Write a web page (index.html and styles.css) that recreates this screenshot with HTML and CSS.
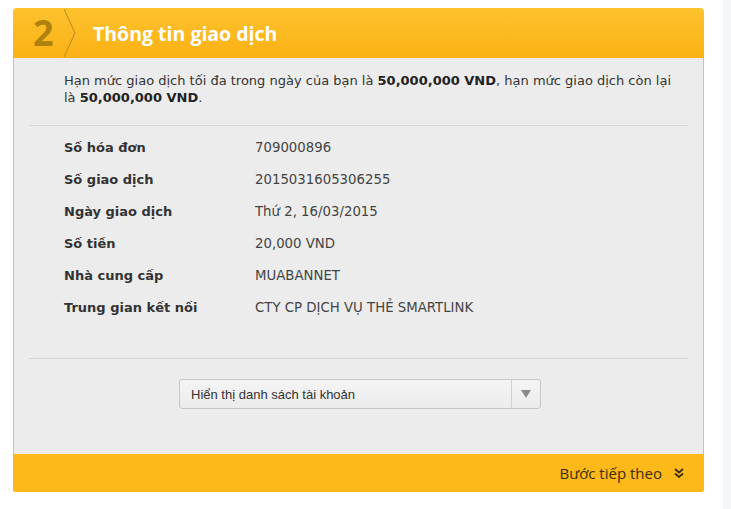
FILE: index.html
```html
<!DOCTYPE html>
<html lang="vi">

<head>
  <meta charset="UTF-8">
  <meta name="viewport" content="width=device-width, initial-scale=1.0">
  <title>Thông tin giao dịch</title>
  <link rel="stylesheet" href="styles.css">
</head>

<body>
  <div class="page">
    <section class="step">
      <header class="step-head">
        <span class="step-num">2</span>
        <svg class="step-arrow" width="14" height="50" viewBox="0 0 14 50">
          <path d="M1 1 L12 25 L1 49" fill="none" stroke="#b98a1c" stroke-width="1" />
        </svg>
        <h2 class="step-title">Thông tin giao dịch</h2>
      </header>

      <div class="step-body">
        <p class="limit">
          Hạn mức giao dịch tối đa trong ngày của bạn là <b>50,000,000 VND</b>, hạn mức giao dịch còn lại
          là <b>50,000,000 VND</b>.
        </p>

        <hr class="line">

        <dl class="details">
          <dt>Số hóa đơn</dt>
          <dd>709000896</dd>
          <dt>Số giao dịch</dt>
          <dd>2015031605306255</dd>
          <dt>Ngày giao dịch</dt>
          <dd>Thứ 2, 16/03/2015</dd>
          <dt>Số tiền</dt>
          <dd>20,000 VND</dd>
          <dt>Nhà cung cấp</dt>
          <dd>MUABANNET</dd>
          <dt>Trung gian kết nối</dt>
          <dd>CTY CP DỊCH VỤ THẺ SMARTLINK</dd>
        </dl>

        <hr class="line">

        <div class="picker">
          <span class="picker-text">Hiển thị danh sách tài khoản</span>
          <span class="picker-btn">
            <svg width="10" height="8" viewBox="0 0 10 8"><path d="M0 0 H10 L5 8 Z" fill="#8a8a8a" /></svg>
          </span>
        </div>
      </div>

      <footer class="step-foot">
        <span>Bước tiếp theo</span>
        <svg class="next-icon" width="10" height="10" viewBox="0 0 10 10">
          <path d="M1 1 L5 4.5 L9 1 M1 5.5 L5 9 L9 5.5" fill="none" stroke="#3b2d0b" stroke-width="1.8" />
        </svg>
      </footer>
    </section>

    <div class="side"></div>
  </div>
</body>

</html>
```

FILE: styles.css
```css
html {
  margin: 0;
  padding: 0;
  background: #fff;
}

body {
  margin: 0;
  padding: 0;
}

.page {
  display: flex;
  min-height: 509px;
}

.step {
  width: 691px;
  margin: 8px 0 0 13px;
  align-self: flex-start;
}

.step-head {
  display: flex;
  align-items: center;
  height: 50px;
  border-radius: 4px 4px 0 0;
  background: linear-gradient(#fdc22e, #fbb114);
}

.step-num {
  width: 20px;
  margin-left: 20px;
  font-family: "Open Sans", sans-serif;
  font-size: 36px;
  font-weight: 700;
  line-height: 1;
  color: #ad820f;
}

.step-arrow {
  margin-left: 10px;
}

.step-title {
  margin: 0 0 0 16px;
  font-family: "Open Sans", sans-serif;
  font-size: 19.5px;
  font-weight: 700;
  color: #fff;
}

.step-body {
  background: #ececec;
  border-left: 1px solid #f3c04a;
  border-right: 1px solid #f3c04a;
  padding: 14px 15px 45px;
}

.limit {
  margin: 0 12px 0 35px;
  font-family: "DejaVu Sans", Tahoma, sans-serif;
  font-size: 13px;
  line-height: 17px;
  color: #333;
}

.limit b {
  color: #222;
}

.line {
  border: 0;
  border-top: 1px solid #d6d6d6;
  margin: 19px 0 0;
}

.details {
  display: grid;
  grid-template-columns: 191px 1fr;
  grid-auto-rows: 32px;
  align-items: center;
  margin: 5px 0 35px 35px;
  font-family: "DejaVu Sans", Verdana, sans-serif;
  font-size: 13px;
}

.details dt {
  font-weight: 700;
  color: #333;
}

.details dd {
  margin: 0;
  font-size: 13.3px;
  color: #444;
}

.details + .line {
  margin-top: 0;
}

.picker {
  display: flex;
  width: 360px;
  height: 28px;
  margin: 20px 0 0 150px;
  border: 1px solid #c6c6c6;
  border-radius: 3px;
  background: linear-gradient(#f4f4f4, #ececec);
  font-family: "Liberation Sans", Arial, sans-serif;
  font-size: 13px;
  color: #333;
}

.picker-text {
  flex: 1;
  display: flex;
  align-items: center;
  padding-left: 11px;
}

.picker-btn {
  width: 28px;
  display: flex;
  align-items: center;
  justify-content: center;
  border-left: 1px solid #d0d0d0;
}

.step-foot {
  display: flex;
  align-items: center;
  justify-content: flex-end;
  gap: 12px;
  height: 38px;
  padding-right: 20px;
  border-radius: 0 0 2px 2px;
  background: #fdb81a;
  font-family: "Open Sans", sans-serif;
  font-size: 15px;
  color: #3b2d0b;
}

.side {
  margin-left: auto;
  width: 8px;
  background: #f5f6f8;
}
```
